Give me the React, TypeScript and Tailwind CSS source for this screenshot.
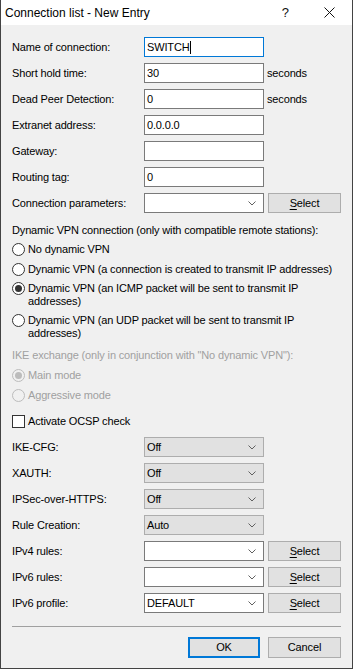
import type { ReactNode } from 'react'

const font = { fontFamily: '"Liberation Sans", Arial, sans-serif' }

function Chevron() {
  return (
    <svg width="8" height="5" viewBox="0 0 8 5" className="shrink-0">
      <polyline points="0.5,0.5 4,4 7.5,0.5" fill="none" stroke="#606060" strokeWidth="1" />
    </svg>
  )
}

function Row({ label, children }: { label: string; children: ReactNode }) {
  return (
    <div className="flex h-[20px] items-center">
      <div className="w-[132px] shrink-0 leading-[13px]">{label}</div>
      {children}
    </div>
  )
}

function TextBox({ value, focused, caret }: { value: string; focused?: boolean; caret?: boolean }) {
  return (
    <div
      className={`flex h-[20px] w-[120px] items-center bg-white pl-[2px] ${
        focused ? 'border border-[#0078d7]' : 'border border-[#7a7a7a]'
      }`}
    >
      <span>{value}</span>
      {caret && <span className="ml-[1px] h-[13px] w-px bg-black" />}
    </div>
  )
}

function Combo({ value = '', gray }: { value?: string; gray?: boolean }) {
  return (
    <div
      className={`flex h-[20px] w-[120px] items-center justify-between pl-[2px] pr-[7px] ${
        gray ? 'border border-[#adadad] bg-[#e1e1e1]' : 'border border-[#7a7a7a] bg-white'
      }`}
    >
      <span>{value}</span>
      <Chevron />
    </div>
  )
}

function SelectButton() {
  return (
    <div className="ml-[4px] flex h-[20px] w-[73px] items-center justify-center border border-[#adadad] bg-[#e1e1e1]">
      <span>
        <span className="underline underline-offset-[2px]">S</span>elect
      </span>
    </div>
  )
}

function Radio({
  checked,
  disabled,
  children,
}: {
  checked?: boolean
  disabled?: boolean
  children: ReactNode
}) {
  return (
    <div className={`flex items-start leading-[13px] ${disabled ? 'text-[#a0a0a0]' : ''}`}>
      <span
        className={`flex h-[13px] w-[13px] shrink-0 items-center justify-center rounded-full border ${
          disabled ? 'border-[#bcbcbc] bg-[#f0f0f0]' : 'border-[#333333] bg-white'
        }`}
      >
        {checked && (
          <span className={`h-[7px] w-[7px] rounded-full ${disabled ? 'bg-[#bcbcbc]' : 'bg-[#333333]'}`} />
        )}
      </span>
      <span className="ml-[3px]">{children}</span>
    </div>
  )
}

export default function App() {
  return (
    <div className="h-[669px] w-[353px] bg-white text-[11px] tracking-[-0.15px] text-black" style={font}>
      <div className="flex h-full w-full flex-col border-x border-b border-[#434343]">
        {/* Title bar */}
        <div className="flex h-[25px] shrink-0 items-center bg-white tracking-normal">
          <span className="ml-[4px] text-[12px]">Connection list - New Entry</span>
          <span className="ml-auto mr-[35px] text-[13px] text-[#111]">?</span>
          <svg width="11" height="11" viewBox="0 0 11 11" className="mr-[17px]">
            <path d="M0.5 0.5 L10.5 10.5 M10.5 0.5 L0.5 10.5" stroke="#111" strokeWidth="1" />
          </svg>
        </div>

        {/* Body */}
        <div className="flex flex-1 flex-col bg-[#f0f0f0] pl-[11px] pt-[12px]">
          <div className="flex flex-col gap-[6px]">
            <Row label="Name of connection:">
              <TextBox value="SWITCH" focused caret />
            </Row>
            <Row label="Short hold time:">
              <TextBox value="30" />
              <span className="ml-[3px]">seconds</span>
            </Row>
            <Row label="Dead Peer Detection:">
              <TextBox value="0" />
              <span className="ml-[3px]">seconds</span>
            </Row>
            <Row label="Extranet address:">
              <TextBox value="0.0.0.0" />
            </Row>
            <Row label="Gateway:">
              <TextBox value="" />
            </Row>
            <Row label="Routing tag:">
              <TextBox value="0" />
            </Row>
            <Row label="Connection parameters:">
              <Combo />
              <SelectButton />
            </Row>
          </div>

          <div className="mt-[11px] leading-[13px]">
            Dynamic VPN connection (only with compatible remote stations):
          </div>
          <div className="mt-[6px]">
            <Radio>No dynamic VPN</Radio>
          </div>
          <div className="mt-[7px]">
            <Radio>Dynamic VPN (a connection is created to transmit IP addresses)</Radio>
          </div>
          <div className="mt-[6px]">
            <Radio checked>
              Dynamic VPN (an ICMP packet will be sent to transmit IP
              <br />
              addresses)
            </Radio>
          </div>
          <div className="mt-[6px]">
            <Radio>
              Dynamic VPN (an UDP packet will be sent to transmit IP
              <br />
              addresses)
            </Radio>
          </div>

          <div className="mt-[9px] leading-[13px] text-[#a0a0a0]">
            IKE exchange (only in conjunction with "No dynamic VPN"):
          </div>
          <div className="mt-[7px]">
            <Radio checked disabled>
              Main mode
            </Radio>
          </div>
          <div className="mt-[7px]">
            <Radio disabled>Aggressive mode</Radio>
          </div>

          <div className="mt-[13px] flex items-start leading-[13px]">
            <span className="h-[13px] w-[13px] shrink-0 border border-[#333333] bg-white" />
            <span className="ml-[3px]">Activate OCSP check</span>
          </div>

          <div className="mt-[9px] flex flex-col gap-[6px]">
            <Row label="IKE-CFG:">
              <Combo value="Off" gray />
            </Row>
            <Row label="XAUTH:">
              <Combo value="Off" gray />
            </Row>
            <Row label="IPSec-over-HTTPS:">
              <Combo value="Off" gray />
            </Row>
            <Row label="Rule Creation:">
              <Combo value="Auto" gray />
            </Row>
            <Row label="IPv4 rules:">
              <Combo />
              <SelectButton />
            </Row>
            <Row label="IPv6 rules:">
              <Combo />
              <SelectButton />
            </Row>
            <Row label="IPv6 profile:">
              <Combo value="DEFAULT" />
              <SelectButton />
            </Row>
          </div>

          <div className="mt-[13px] mr-[11px] h-px bg-[#a0a0a0]" />

          <div className="mt-[10px] flex justify-end gap-[8px] pr-[11px]">
            <div className="flex h-[21px] w-[72px] items-center justify-center border-2 border-[#0078d7] bg-[#e1e1e1]">
              OK
            </div>
            <div className="flex h-[21px] w-[73px] items-center justify-center border border-[#adadad] bg-[#e1e1e1]">
              Cancel
            </div>
          </div>
        </div>
      </div>
    </div>
  )
}
